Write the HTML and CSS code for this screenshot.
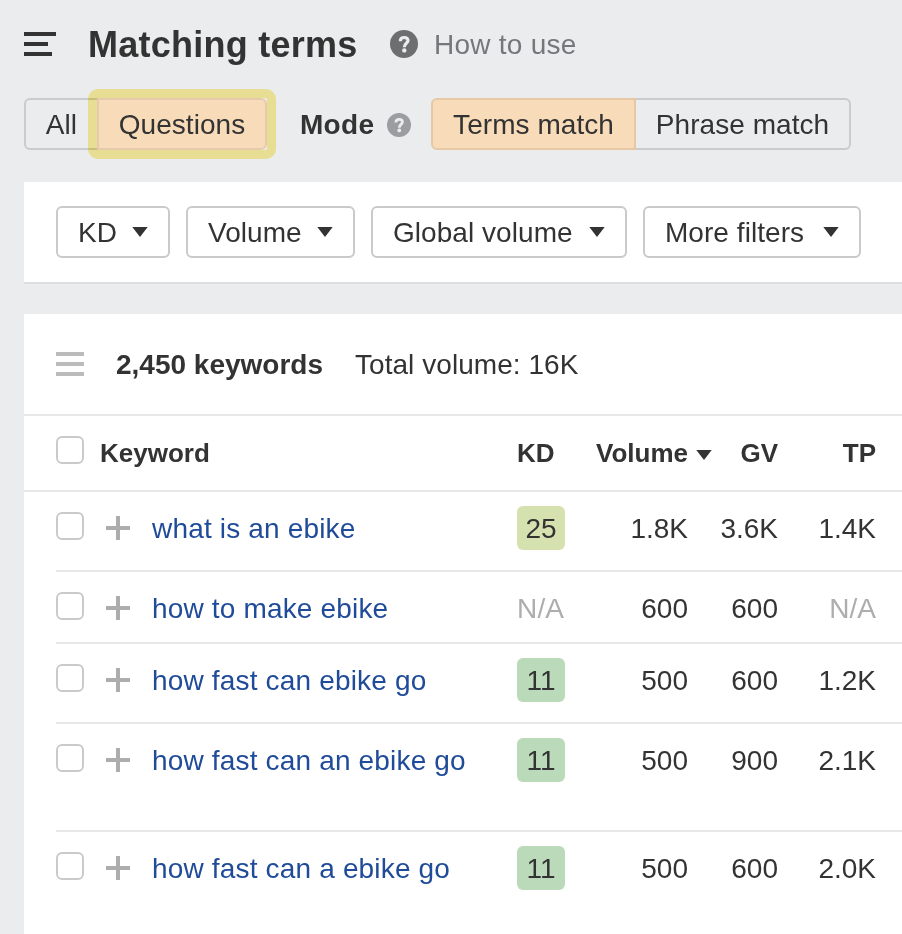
FILE: index.html
```html
<!DOCTYPE html>
<html lang="en">
<head>
<meta charset="utf-8">
<title>Matching terms</title>
<link rel="stylesheet" href="styles.css">
</head>
<body>
<svg width="0" height="0" class="defs">
  <symbol id="help" viewBox="0 0 28 28">
    <circle cx="14" cy="14" r="14" fill="currentColor"/>
    <path d="M10.3 11.2C10.3 8.6 11.6 7.5 14.2 7.5C16.5 7.5 18 8.6 18 10.6C18 13.4 14.3 13.2 14.3 17.2" fill="none" stroke="#ebeced" stroke-width="3.2"/>
    <circle cx="14.3" cy="20.4" r="2.2" fill="#ebeced"/>
  </symbol>
  <symbol id="caret" viewBox="0 0 16 10"><path d="M0.3 0H15.7L8 10Z" fill="#333"/></symbol>
  <symbol id="plus" viewBox="0 0 24 24"><path d="M0 12H24M12 0V24" stroke="#adadad" stroke-width="4"/></symbol>
</svg>

<header class="title-row">
  <svg class="menu" viewBox="0 0 32 24"><path d="M0 2H32M0 12H24M0 22H28" stroke="#333" stroke-width="4"/></svg>
  <h1>Matching terms</h1>
  <svg class="help-lg"><use href="#help"/></svg>
  <span class="how">How to use</span>
</header>

<div class="mode-row">
  <div class="segmented">
    <span class="seg first all">All</span>
    <span class="seg last questions active">Questions<i class="highlight"></i></span>
  </div>
  <strong class="mode">Mode</strong>
  <svg class="help-sm"><use href="#help"/></svg>
  <div class="segmented">
    <span class="seg first terms active">Terms match</span>
    <span class="seg last phrase">Phrase match</span>
  </div>
</div>

<section class="filters">
  <div class="filter kd-filter">KD<svg class="caret"><use href="#caret"/></svg></div>
  <div class="filter vol-filter">Volume<svg class="caret"><use href="#caret"/></svg></div>
  <div class="filter gv-filter">Global volume<svg class="caret"><use href="#caret"/></svg></div>
  <div class="filter more-filter">More filters<svg class="caret"><use href="#caret"/></svg></div>
</section>

<main class="results">
  <div class="summary">
    <svg class="list" viewBox="0 0 28 24"><path d="M0 2H28M0 12H28M0 22H28" stroke="#bbb" stroke-width="4"/></svg>
    <strong>2,450 keywords</strong>
    <span>Total volume: 16K</span>
  </div>
  <div class="head">
    <i class="check"></i><span class="kw-head">Keyword</span><span>KD</span>
    <span class="num sorted">Volume<svg class="caret"><use href="#caret"/></svg></span>
    <span class="num">GV</span><span class="num">TP</span>
  </div>
  <div class="rows">
    <div class="row"><i class="check"></i><svg class="plus"><use href="#plus"/></svg><a>what is an ebike</a><span class="badge lime">25</span><span class="num">1.8K</span><span class="num">3.6K</span><span class="num">1.4K</span></div>
    <div class="row short"><i class="check"></i><svg class="plus"><use href="#plus"/></svg><a>how to make ebike</a><span class="na">N/A</span><span class="num">600</span><span class="num">600</span><span class="num na">N/A</span></div>
    <div class="row"><i class="check"></i><svg class="plus"><use href="#plus"/></svg><a>how fast can ebike go</a><span class="badge">11</span><span class="num">500</span><span class="num">600</span><span class="num">1.2K</span></div>
    <div class="row tall"><i class="check"></i><svg class="plus"><use href="#plus"/></svg><a>how fast can an ebike go</a><span class="badge">11</span><span class="num">500</span><span class="num">900</span><span class="num">2.1K</span></div>
    <div class="row"><i class="check"></i><svg class="plus"><use href="#plus"/></svg><a>how fast can a ebike go</a><span class="badge">11</span><span class="num">500</span><span class="num">600</span><span class="num">2.0K</span></div>
  </div>
</main>
</body>
</html>
```
FILE: styles.css
```css
* { box-sizing: border-box; }
body {
  margin: 0;
  height: 934px;
  overflow: hidden;
  display: flex;
  flex-direction: column;
  padding-left: 24px;
  background: #ebeced;
  color: #333;
  font: 28px/46px "Liberation Sans", Arial, sans-serif;
  letter-spacing: 0.17px;
  white-space: nowrap;
}
svg { display: block; flex: none; }
.defs { position: absolute; }

.title-row { display: flex; align-items: center; height: 88px; padding-top: 2px; flex: none; }
.title-row svg { margin-bottom: 2px; }
.menu { width: 32px; height: 24px; margin-right: 32px; }
h1 { margin: 0; width: 302px; font-size: 36px; letter-spacing: 0.25px; }
.help-lg { width: 28px; height: 28px; color: #6d6e70; }
.how { margin-left: 16px; color: #76777a; letter-spacing: 0.25px; }

.mode-row { display: flex; align-items: center; height: 52px; margin-top: 10px; flex: none; }
.segmented { display: flex; }
.seg {
  height: 52px;
  line-height: 50px;
  border: 2px solid #cacbcc;
  text-align: center;
  letter-spacing: 0.05px;
}
.first { border-radius: 6px 0 0 6px; border-right: 0; }
.last { border-radius: 0 6px 6px 0; }
.active { background: #f8dbb8; border-color: #e6c8a6; }
.all { width: 73px; }
.questions { position: relative; width: 170px; border-color: #e7caae; }
.highlight {
  position: absolute;
  inset: -11px;
  border: 9px solid #fbf09f;
  border-radius: 10px;
  mix-blend-mode: multiply;
}
.mode { width: 87px; margin-left: 33px; padding-top: 2px; letter-spacing: 0.3px; }
.help-sm { width: 24px; height: 24px; margin: 2px 20px 0 0; color: #9c9da0; }
.terms { width: 205px; border-right: 2px solid #e6c8a6; }
.phrase { width: 215px; border-left: 0; }

.filters {
  display: flex;
  gap: 16px;
  flex: none;
  height: 102px;
  margin-top: 32px;
  padding: 24px 32px;
  background: #fff;
  border-bottom: 2px solid #dddedf;
}
.filter {
  display: flex;
  align-items: center;
  justify-content: space-between;
  height: 52px;
  padding: 2px 20px 0;
  border: 2px solid #cacaca;
  border-radius: 6px;
  letter-spacing: 0.05px;
}
.caret { width: 16px; height: 10px; }
.filter .caret { margin-bottom: 2px; }
.kd-filter { width: 114px; }
.vol-filter { width: 169px; }
.gv-filter { width: 256px; }
.more-filter { width: 218px; }

.results { flex: 1; margin-top: 30px; background: #fff; }
.summary { display: flex; align-items: center; height: 100px; padding: 2px 0 0 32px; letter-spacing: 0.05px; }
.summary strong { width: 239px; letter-spacing: 0; }
.list { width: 28px; height: 24px; margin: 0 32px 2px 0; }
.head, .row {
  display: grid;
  grid-template-columns: 44px 52px 365px 48px 123px 90px 98px;
  align-items: start;
}
.head {
  height: 78px;
  padding: 20px 0 0 32px;
  border: solid #e8e8e8;
  border-width: 2px 0;
  font-size: 26px;
  font-weight: bold;
  line-height: 34px;
  letter-spacing: 0;
}
.kw-head { grid-column: span 2; }
.check { width: 28px; height: 28px; border: 2px solid #cacaca; border-radius: 6px; }
.num { text-align: right; }
.sorted { position: relative; }
.sorted .caret { position: absolute; left: calc(100% + 8px); top: 14px; }

.rows { padding-left: 32px; }
.row { height: 80px; padding-top: 14px; border-bottom: 2px solid #e8e8e8; }
.row:last-child { border: 0; }
.short { height: 72px; }
.tall { height: 108px; }
.row .check { margin-top: 6px; }
.plus { width: 24px; height: 24px; margin: 10px 0 0 6px; }
.row a { color: #1f4b98; }
.row .num { letter-spacing: 0; }
.badge { height: 44px; border-radius: 6px; background: #bbdab9; text-align: center; letter-spacing: 0; }
.lime { background: #d6e1b0; }
.na { color: #adadad; }
```
